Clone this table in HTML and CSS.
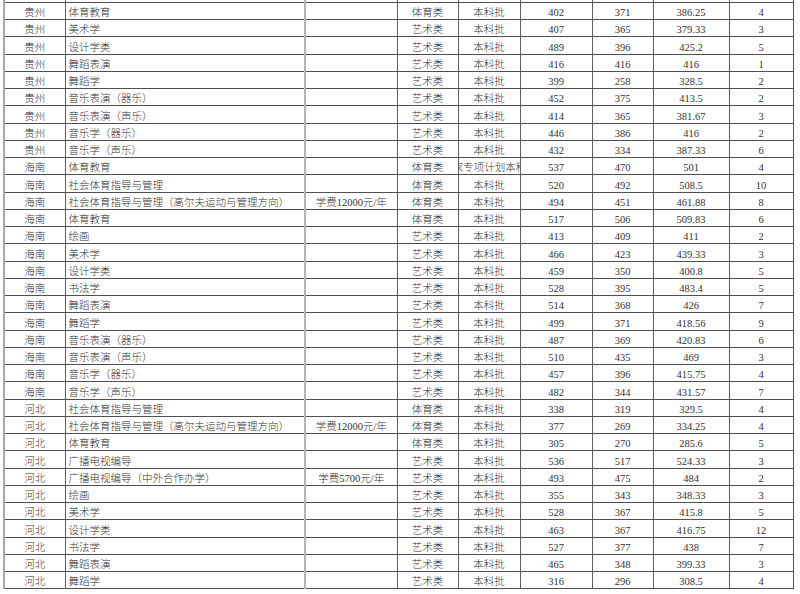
FILE: index.html
```html
<!DOCTYPE html>
<html lang="zh-CN">
<head>
<meta charset="utf-8">
<title>录取分数</title>
<link rel="stylesheet" href="styles.css">
</head>
<body>
<table class="scores">
<colgroup>
<col class="c-prov"><col class="c-major"><col class="c-note"><col class="c-type"><col class="c-batch"><col class="c-num"><col class="c-num2"><col class="c-avg"><col class="c-cnt">
</colgroup>
<tbody>
<tr><td>贵州</td><td class="major">社会体育指导与管理</td><td class="note"></td><td>体育类</td><td>本科批</td><td>392</td><td>361</td><td>376.5</td><td>2</td></tr>
<tr><td>贵州</td><td class="major">体育教育</td><td class="note"></td><td>体育类</td><td>本科批</td><td>402</td><td>371</td><td>386.25</td><td>4</td></tr>
<tr><td>贵州</td><td class="major">美术学</td><td class="note"></td><td>艺术类</td><td>本科批</td><td>407</td><td>365</td><td>379.33</td><td>3</td></tr>
<tr><td>贵州</td><td class="major">设计学类</td><td class="note"></td><td>艺术类</td><td>本科批</td><td>489</td><td>396</td><td>425.2</td><td>5</td></tr>
<tr><td>贵州</td><td class="major">舞蹈表演</td><td class="note"></td><td>艺术类</td><td>本科批</td><td>416</td><td>416</td><td>416</td><td>1</td></tr>
<tr><td>贵州</td><td class="major">舞蹈学</td><td class="note"></td><td>艺术类</td><td>本科批</td><td>399</td><td>258</td><td>328.5</td><td>2</td></tr>
<tr><td>贵州</td><td class="major">音乐表演（器乐）</td><td class="note"></td><td>艺术类</td><td>本科批</td><td>452</td><td>375</td><td>413.5</td><td>2</td></tr>
<tr><td>贵州</td><td class="major">音乐表演（声乐）</td><td class="note"></td><td>艺术类</td><td>本科批</td><td>414</td><td>365</td><td>381.67</td><td>3</td></tr>
<tr><td>贵州</td><td class="major">音乐学（器乐）</td><td class="note"></td><td>艺术类</td><td>本科批</td><td>446</td><td>386</td><td>416</td><td>2</td></tr>
<tr><td>贵州</td><td class="major">音乐学（声乐）</td><td class="note"></td><td>艺术类</td><td>本科批</td><td>432</td><td>334</td><td>387.33</td><td>6</td></tr>
<tr><td>海南</td><td class="major">体育教育</td><td class="note"></td><td>体育类</td><td class="clip"><span>国家专项计划本科批</span></td><td>537</td><td>470</td><td>501</td><td>4</td></tr>
<tr><td>海南</td><td class="major">社会体育指导与管理</td><td class="note"></td><td>体育类</td><td>本科批</td><td>520</td><td>492</td><td>508.5</td><td>10</td></tr>
<tr><td>海南</td><td class="major">社会体育指导与管理（高尔夫运动与管理方向）</td><td class="note">学费12000元/年</td><td>体育类</td><td>本科批</td><td>494</td><td>451</td><td>461.88</td><td>8</td></tr>
<tr><td>海南</td><td class="major">体育教育</td><td class="note"></td><td>体育类</td><td>本科批</td><td>517</td><td>506</td><td>509.83</td><td>6</td></tr>
<tr><td>海南</td><td class="major">绘画</td><td class="note"></td><td>艺术类</td><td>本科批</td><td>413</td><td>409</td><td>411</td><td>2</td></tr>
<tr><td>海南</td><td class="major">美术学</td><td class="note"></td><td>艺术类</td><td>本科批</td><td>466</td><td>423</td><td>439.33</td><td>3</td></tr>
<tr><td>海南</td><td class="major">设计学类</td><td class="note"></td><td>艺术类</td><td>本科批</td><td>459</td><td>350</td><td>400.8</td><td>5</td></tr>
<tr><td>海南</td><td class="major">书法学</td><td class="note"></td><td>艺术类</td><td>本科批</td><td>528</td><td>395</td><td>483.4</td><td>5</td></tr>
<tr><td>海南</td><td class="major">舞蹈表演</td><td class="note"></td><td>艺术类</td><td>本科批</td><td>514</td><td>368</td><td>426</td><td>7</td></tr>
<tr><td>海南</td><td class="major">舞蹈学</td><td class="note"></td><td>艺术类</td><td>本科批</td><td>499</td><td>371</td><td>418.56</td><td>9</td></tr>
<tr><td>海南</td><td class="major">音乐表演（器乐）</td><td class="note"></td><td>艺术类</td><td>本科批</td><td>487</td><td>369</td><td>420.83</td><td>6</td></tr>
<tr><td>海南</td><td class="major">音乐表演（声乐）</td><td class="note"></td><td>艺术类</td><td>本科批</td><td>510</td><td>435</td><td>469</td><td>3</td></tr>
<tr><td>海南</td><td class="major">音乐学（器乐）</td><td class="note"></td><td>艺术类</td><td>本科批</td><td>457</td><td>396</td><td>415.75</td><td>4</td></tr>
<tr><td>海南</td><td class="major">音乐学（声乐）</td><td class="note"></td><td>艺术类</td><td>本科批</td><td>482</td><td>344</td><td>431.57</td><td>7</td></tr>
<tr><td>河北</td><td class="major">社会体育指导与管理</td><td class="note"></td><td>体育类</td><td>本科批</td><td>338</td><td>319</td><td>329.5</td><td>4</td></tr>
<tr><td>河北</td><td class="major">社会体育指导与管理（高尔夫运动与管理方向）</td><td class="note">学费12000元/年</td><td>体育类</td><td>本科批</td><td>377</td><td>269</td><td>334.25</td><td>4</td></tr>
<tr><td>河北</td><td class="major">体育教育</td><td class="note"></td><td>体育类</td><td>本科批</td><td>305</td><td>270</td><td>285.6</td><td>5</td></tr>
<tr><td>河北</td><td class="major">广播电视编导</td><td class="note"></td><td>艺术类</td><td>本科批</td><td>536</td><td>517</td><td>524.33</td><td>3</td></tr>
<tr><td>河北</td><td class="major">广播电视编导（中外合作办学）</td><td class="note">学费5700元/年</td><td>艺术类</td><td>本科批</td><td>493</td><td>475</td><td>484</td><td>2</td></tr>
<tr><td>河北</td><td class="major">绘画</td><td class="note"></td><td>艺术类</td><td>本科批</td><td>355</td><td>343</td><td>348.33</td><td>3</td></tr>
<tr><td>河北</td><td class="major">美术学</td><td class="note"></td><td>艺术类</td><td>本科批</td><td>528</td><td>367</td><td>415.8</td><td>5</td></tr>
<tr><td>河北</td><td class="major">设计学类</td><td class="note"></td><td>艺术类</td><td>本科批</td><td>463</td><td>367</td><td>416.75</td><td>12</td></tr>
<tr><td>河北</td><td class="major">书法学</td><td class="note"></td><td>艺术类</td><td>本科批</td><td>527</td><td>377</td><td>438</td><td>7</td></tr>
<tr><td>河北</td><td class="major">舞蹈表演</td><td class="note"></td><td>艺术类</td><td>本科批</td><td>465</td><td>348</td><td>399.33</td><td>3</td></tr>
<tr><td>河北</td><td class="major">舞蹈学</td><td class="note"></td><td>艺术类</td><td>本科批</td><td>316</td><td>296</td><td>308.5</td><td>4</td></tr>
</tbody>
</table>
</body>
</html>
```
FILE: styles.css
```css
html, body {
  margin: 0;
  padding: 0;
  background: #ffffff;
}
body {
  overflow: hidden;
  height: 594px;
}
.scores {
  margin: -15.3px 0 0 3px;
  border-collapse: collapse;
  table-layout: fixed;
  width: 790px;
  font-family: "Liberation Serif", "Noto Sans CJK SC", serif;
  font-size: 10.5px;
  font-weight: 300;
  color: #333333;
  border-left: 2px solid #a9a9a9;
  border-right: 1px solid #555;
}
.c-prov { width: 61px; }
.c-major { width: 240px; }
.c-note { width: 92px; }
.c-type { width: 61px; }
.c-batch { width: 62px; }
.c-num { width: 72px; }
.c-num2 { width: 61px; }
.c-avg { width: 76px; }
.c-cnt { width: 64px; }
.scores tr {
  height: 17.26px;
}
.scores td {
  border-top: 1px solid #505050;
  border-bottom: 1px solid #505050;
  border-left: 1px solid #606060;
  padding: 4px 0 0 0;
  text-align: center;
  vertical-align: middle;
  white-space: nowrap;
  overflow: hidden;
  line-height: 12px;
  height: 17.26px;
  box-sizing: border-box;
}
.scores td:first-child {
  border-left: 2px solid #a9a9a9;
}
.scores td.major {
  text-align: left;
  padding-left: 3px;
}
.scores td.note {
  border-left: 2px solid #b4b4b4;
}
.scores td.clip {
  text-overflow: clip;
}
.scores td.clip span {
  display: block;
  width: 100px;
  margin-left: -19px;
  text-align: center;
}
```
